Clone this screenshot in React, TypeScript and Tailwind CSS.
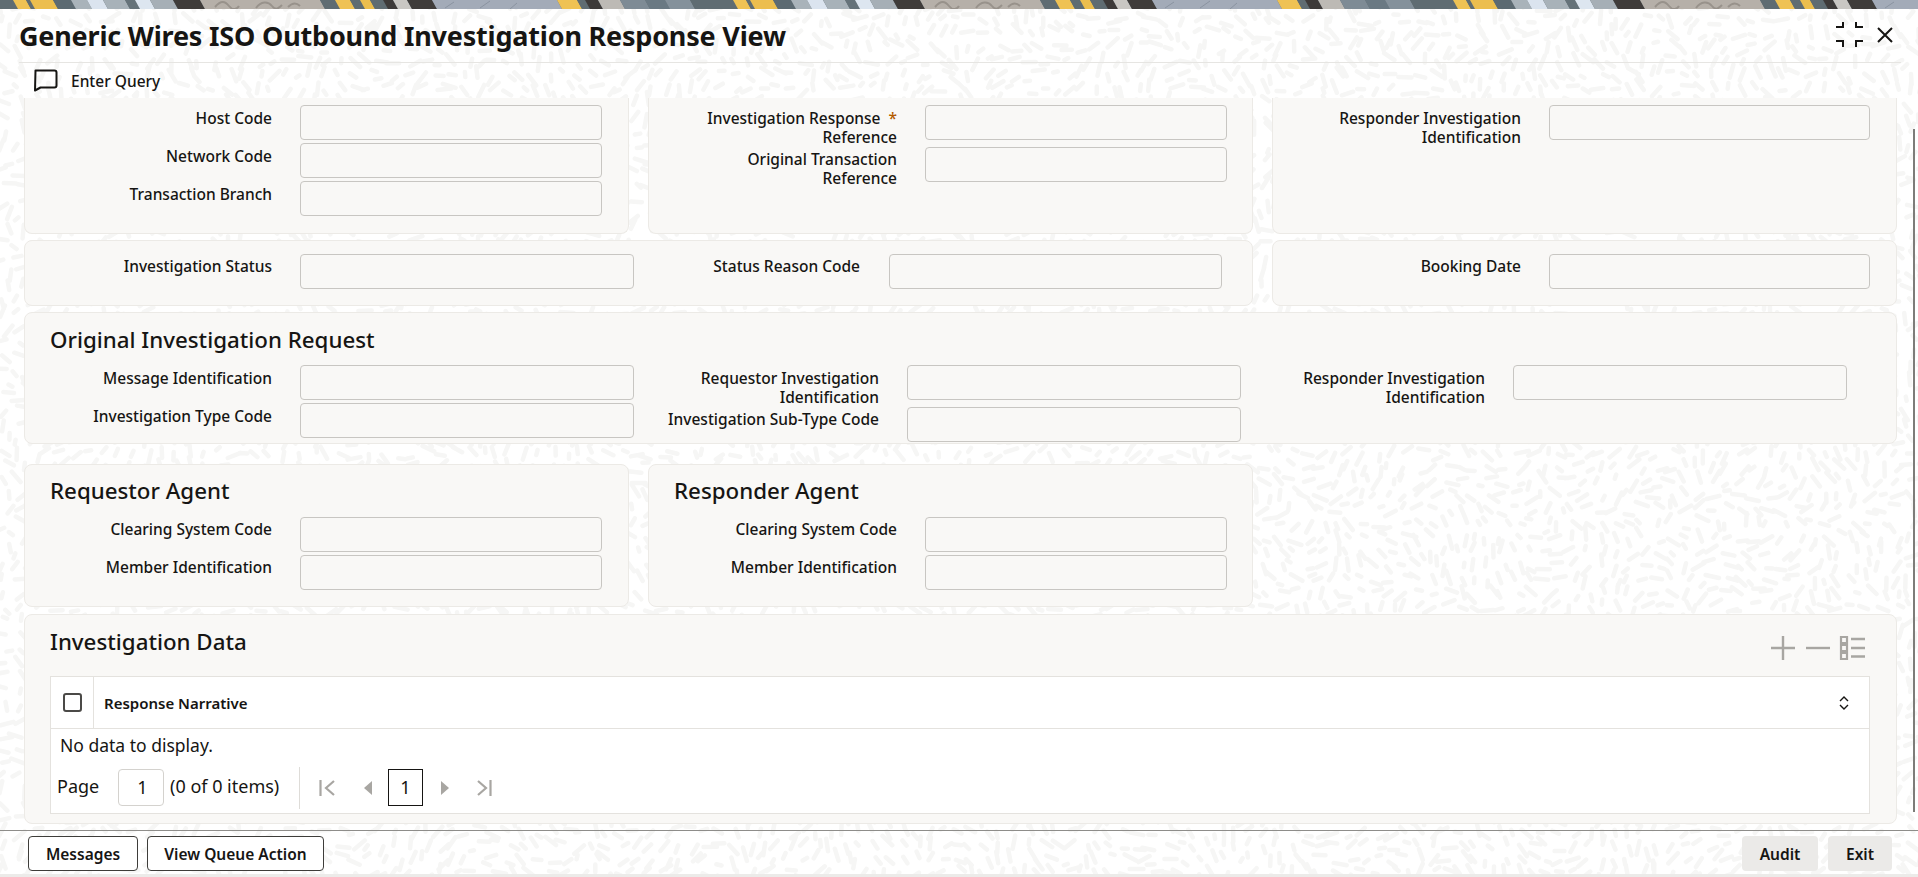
import type { ReactNode } from "react";

// seeded strokes for the faint "rice" texture behind the form
function makeTexture() {
  let seed = 1337;
  const rnd = () => {
    seed = (seed * 16807) % 2147483647;
    return seed / 2147483647;
  };
  const parts: string[] = [];
  for (let y = 0; y < 880; y += 14) {
    for (let x = 0; x < 1920; x += 14) {
      const px = x + rnd() * 11;
      const py = y + rnd() * 11;
      const flow = Math.sin(px / 38) + Math.cos(py / 30) + Math.sin((px + py) / 90);
      const angle = flow * 1.5 + (rnd() - 0.5) * 0.9;
      const len = 2 + rnd() * 5;
      const dx = Math.cos(angle) * len;
      const dy = Math.sin(angle) * len;
      parts.push(
        `M${(px - dx).toFixed(1)} ${(py - dy).toFixed(1)}L${(px + dx).toFixed(1)} ${(py + dy).toFixed(1)}`
      );
    }
  }
  return parts.join("");
}
const texture = makeTexture();

const bandStripes: [number, number, string][] = [
  [-6, 13, "#5f6c72"],
  [13, 26, "#efc254"],
  [26, 30, "#5f6c72"],
  [30, 53, "#ecbe4e"],
  [53, 71, "#5c6a72"],
  [71, 87, "#a9b3ba"],
  [87, 103, "#dbe4ef"],
  [103, 125, "#a8b2b9"],
  [125, 135, "#66737a"],
  [135, 150, "#dde6f0"],
  [150, 173, "#a6afb6"],
  [173, 200, "#3f3c3a"],
  [200, 320, "#b6b0a9"],
  [320, 335, "#5f6c72"],
  [335, 350, "#efc254"],
  [350, 360, "#5f6c72"],
  [360, 370, "#ecbe4e"],
  [370, 383, "#5f6c72"],
  [383, 393, "#3d3a39"],
  [393, 407, "#c9c7c3"],
  [407, 432, "#3f3c3a"],
  [432, 557, "#a3abb8"],
  [557, 577, "#efc254"],
  [577, 585, "#5f6c72"],
  [585, 598, "#3d3a39"],
  [598, 620, "#bdbab5"],
  [620, 645, "#7e8b95"],
  [645, 665, "#6a7983"],
  [665, 690, "#84919b"],
  [690, 714, "#5f6c72"],
];

function TopBand() {
  return (
    <svg className="block h-[9px] w-full shrink-0" viewBox="0 0 1918 9" preserveAspectRatio="none">
      <defs>
        <pattern id="band" x="0" y="0" width="720" height="9" patternUnits="userSpaceOnUse">
          <rect width="720" height="9" fill="#5f6c72" />
          {bandStripes.map(([a, b, c]) => (
            <polygon key={a} points={`${a},0 ${b},0 ${b + 5},9 ${a + 5},9`} fill={c} />
          ))}
          <path
            d="M215 7c6-7 10-6 14-1s8 3 10 0M256 8c5-7 12-7 16-2s7 2 10-1M288 7c5-5 9-4 12-1"
            fill="none"
            stroke="#98928b"
            strokeWidth="2"
          />
          <path d="M445 8l9-6M480 8l10-7M510 9l7-6" fill="none" stroke="#8a93a0" strokeWidth="1" />
        </pattern>
      </defs>
      <rect width="1918" height="9" fill="url(#band)" />
    </svg>
  );
}

function Panel({ className, children }: { className: string; children: ReactNode }) {
  return (
    <div className={`rounded-[8px] border border-[#eceae6] bg-[#f9f8f6] ${className}`}>{children}</div>
  );
}

function Input({ className }: { className: string }) {
  return (
    <div className={`h-[35px] shrink-0 rounded-[4px] border border-[#c8c6c2] bg-[#f9f8f6] ${className}`} />
  );
}

function Field({
  label,
  labelClass,
  inputClass,
}: {
  label: ReactNode;
  labelClass: string;
  inputClass: string;
}) {
  return (
    <div className="flex items-start">
      <div className={`shrink-0 text-right text-[15.5px] leading-[19px] font-medium ${labelClass}`}>{label}</div>
      <Input className={inputClass} />
    </div>
  );
}

function Heading({ children }: { children: ReactNode }) {
  return <div className="text-[22.3px] leading-[30px] font-medium text-[#161513]">{children}</div>;
}

function TableActions() {
  return (
    <svg width="94" height="26" viewBox="0 0 94 26" fill="none" stroke="#a8a6a2" strokeWidth="2.4">
      <path d="M12 1v24M0 13h24" />
      <path d="M35 13h24" />
      <path d="M70 2h6v6h-6zM70 10h6v6h-6zM70 18h6v6h-6z" strokeWidth="2.2" />
      <path d="M80 4h14M80 13h14M80 21.500h14" />
    </svg>
  );
}

function Pager() {
  return (
    <div className="mt-[5px] flex h-[49px] items-center pl-[6px] text-[18px] text-[#161513]">
      <span className="-mt-[2px] w-[61px]">Page</span>
      <div className="flex h-[37px] w-[46px] items-center justify-center rounded-[4px] border border-[#d4d2ce] pl-[3px]">
        1
      </div>
      <span className="-mt-[2px] ml-[6px] w-[129px]">(0 of 0 items)</span>
      <div className="h-[42px] w-px bg-[#dedcd8]" />
      <svg className="ml-[19px]" width="16" height="16" viewBox="0 0 16 16" fill="none" stroke="#a8a6a2" strokeWidth="2.2">
        <path d="M1.500 0v16M15 1 7 8l8 7" />
      </svg>
      <svg className="ml-[28px]" width="10" height="14" viewBox="0 0 10 14" fill="#a8a6a2">
        <path d="M9 0v14L1 7z" />
      </svg>
      <div className="ml-[15px] flex h-[37px] w-[35px] items-center justify-center border border-[#161513]">1</div>
      <svg className="ml-[17px]" width="10" height="14" viewBox="0 0 10 14" fill="#a8a6a2">
        <path d="M1 0v14l8-7z" />
      </svg>
      <svg className="ml-[27px]" width="15" height="16" viewBox="0 0 15 16" fill="none" stroke="#a8a6a2" strokeWidth="2.2">
        <path d="M13.500 0v16M1 1l8 7-8 7" />
      </svg>
    </div>
  );
}

export default function App() {
  const stack = { fontFamily: '"Noto Sans", "Liberation Sans", sans-serif' };
  return (
    <div
      className="relative flex h-[877px] w-[1918px] flex-col overflow-hidden bg-white text-[#161513]"
      style={stack}
    >
      <svg className="absolute inset-0" width="1918" height="877" fill="none">
        <path d={texture} stroke="#f6f6f5" strokeWidth="4.500" strokeLinecap="round" />
      </svg>

      <div className="relative flex min-h-0 flex-1 flex-col">
        <TopBand />

        <header className="mr-[17px] ml-[19px] flex h-[54px] shrink-0 items-center justify-between border-b border-[#e6e5e2]">
          <h1 className="pt-[2px] text-[27px] font-bold tracking-[-0.2px] text-[#161513]">
            Generic Wires ISO Outbound Investigation Response View
          </h1>
          <div className="mr-[8px] mb-[2px] flex items-center gap-[14px]">
            <svg width="27" height="25" viewBox="0 0 27 25" fill="none" stroke="#161513" strokeWidth="2">
              <path d="M0 5h7V0M20 0v5h7M0 19h7v6M27 19h-7v6" />
            </svg>
            <svg width="16" height="16" viewBox="0 0 16 16" fill="none" stroke="#161513" strokeWidth="2">
              <path d="M1 1l14 14M15 1 1 15" />
            </svg>
          </div>
        </header>

        <div className="flex h-[35px] shrink-0 items-center pl-[33px]">
          <svg width="25" height="23" viewBox="0 0 25 23" fill="none" stroke="#161513" strokeWidth="2">
            <path d="M2.500 1.500h19a2 2 0 0 1 2 2v13a2 2 0 0 1-2 2H7.500l-5.500 3z" strokeLinejoin="round" />
          </svg>
          <span className="mt-[2px] ml-[13px] text-[15.5px] font-medium">Enter Query</span>
        </div>

        <main className="flex flex-col pr-[21px] pl-[24px]">
          <div className="flex gap-[19px]">
            <Panel className="h-[136px] w-[605px] rounded-t-none border-t-0 pt-[7px]">
              <div className="flex flex-col gap-[3px]">
                <Field label="Host Code" labelClass="w-[247px] mr-[28px] pt-[4px]" inputClass="w-[302px]" />
                <Field label="Network Code" labelClass="w-[247px] mr-[28px] pt-[4px]" inputClass="w-[302px]" />
                <Field label="Transaction Branch" labelClass="w-[247px] mr-[28px] pt-[4px]" inputClass="w-[302px]" />
              </div>
            </Panel>
            <Panel className="h-[136px] w-[605px] rounded-t-none border-t-0 pt-[7px]">
              <Field
                label={
                  <>
                    Investigation Response<span className="ml-[8px] text-[#b35c00]">*</span>
                    <br />
                    Reference
                  </>
                }
                labelClass="w-[248px] mr-[28px] pt-[4px]"
                inputClass="w-[302px]"
              />
              <Field
                label={
                  <>
                    Original Transaction
                    <br />
                    Reference
                  </>
                }
                labelClass="w-[248px] mr-[28px] pt-[3px] pb-[1px]"
                inputClass="w-[302px]"
              />
            </Panel>
            <Panel className="h-[136px] w-[625px] rounded-t-none border-t-0 pt-[7px]">
              <Field
                label={
                  <>
                    Responder Investigation
                    <br />
                    Identification
                  </>
                }
                labelClass="w-[248px] mr-[28px] pt-[4px]"
                inputClass="w-[321px]"
              />
            </Panel>
          </div>

          <div className="mt-[6px] flex gap-[19px]">
            <Panel className="flex h-[66px] w-[1229px] pt-[13px]">
              <Field label="Investigation Status" labelClass="w-[247px] mr-[28px] pt-[3px]" inputClass="w-[334px]" />
              <Field label="Status Reason Code" labelClass="w-[226px] mr-[29px] pt-[3px]" inputClass="w-[333px]" />
            </Panel>
            <Panel className="h-[66px] w-[625px] pt-[13px]">
              <Field label="Booking Date" labelClass="w-[248px] mr-[28px] pt-[3px]" inputClass="w-[321px]" />
            </Panel>
          </div>

          <Panel className="mt-[6px] h-[132px] w-[1873px] pt-[12px]">
            <div className="pl-[25px]">
              <Heading>Original Investigation Request</Heading>
            </div>
            <div className="mt-[10px] flex">
              <div className="flex flex-col gap-[3px]">
                <Field label="Message Identification" labelClass="w-[247px] mr-[28px] pt-[4px]" inputClass="w-[334px]" />
                <Field label="Investigation Type Code" labelClass="w-[247px] mr-[28px] pt-[4px]" inputClass="w-[334px]" />
              </div>
              <div className="flex flex-col">
                <Field
                  label={
                    <>
                      Requestor Investigation
                      <br />
                      Identification
                    </>
                  }
                  labelClass="w-[245px] mr-[28px] pt-[4px]"
                  inputClass="w-[334px]"
                />
                <Field
                  label="Investigation Sub-Type Code"
                  labelClass="w-[245px] mr-[28px] pt-[3px]"
                  inputClass="w-[334px]"
                />
              </div>
              <Field
                label={
                  <>
                    Responder Investigation
                    <br />
                    Identification
                  </>
                }
                labelClass="w-[244px] mr-[28px] pt-[4px]"
                inputClass="w-[334px]"
              />
            </div>
          </Panel>

          <div className="mt-[20px] flex gap-[19px]">
            <Panel className="h-[143px] w-[605px] pt-[11px]">
              <div className="pl-[25px]">
                <Heading>Requestor Agent</Heading>
              </div>
              <div className="mt-[11px] flex flex-col gap-[3px]">
                <Field label="Clearing System Code" labelClass="w-[247px] mr-[28px] pt-[3px]" inputClass="w-[302px]" />
                <Field label="Member Identification" labelClass="w-[247px] mr-[28px] pt-[3px]" inputClass="w-[302px]" />
              </div>
            </Panel>
            <Panel className="h-[143px] w-[605px] pt-[11px]">
              <div className="pl-[25px]">
                <Heading>Responder Agent</Heading>
              </div>
              <div className="mt-[11px] flex flex-col gap-[3px]">
                <Field label="Clearing System Code" labelClass="w-[248px] mr-[28px] pt-[3px]" inputClass="w-[302px]" />
                <Field label="Member Identification" labelClass="w-[248px] mr-[28px] pt-[3px]" inputClass="w-[302px]" />
              </div>
            </Panel>
          </div>

          <Panel className="mt-[7px] h-[210px] w-[1873px] px-[25px] pt-[12px]">
            <div className="flex h-[49px] items-start justify-between">
              <Heading>Investigation Data</Heading>
              <div className="mt-[8px] mr-[6px]">
                <TableActions />
              </div>
            </div>
            <div className="h-[138px] w-[1820px] border border-[#e4e2de] bg-white">
              <div className="flex h-[52px] items-center border-b border-[#e4e2de]">
                <div className="flex h-full w-[43px] items-center border-r border-[#e4e2de] pl-[12px]">
                  <div className="h-[19px] w-[19px] rounded-[3px] border-2 border-[#4b4a47]" />
                </div>
                <span className="mt-[1px] ml-[10px] flex-1 text-[15px] font-semibold">Response Narrative</span>
                <svg className="mr-[20px]" width="10" height="14" viewBox="0 0 10 14" fill="none" stroke="#161513" strokeWidth="1.400">
                  <path d="M1 5l4-4 4 4M1 9l4 4 4-4" />
                </svg>
              </div>
              <div className="pt-[4px] pl-[9px] text-[17.5px] leading-[25px]">No data to display.</div>
              <Pager />
            </div>
          </Panel>
        </main>

        <footer className="absolute top-[830px] right-0 left-0 flex h-[47px] flex-col border-t border-[#8e8d8a]">
          <div className="flex flex-1 items-start justify-between pt-[5px] pr-[26px] pl-[28px]">
            <div className="flex gap-[9px]">
              <button className="h-[35px] w-[110px] rounded-[4px] border border-[#3e3d3a] bg-white pt-[2px] text-[15.5px] font-semibold">
                Messages
              </button>
              <button className="h-[35px] w-[177px] rounded-[4px] border border-[#3e3d3a] bg-white pt-[2px] text-[15.5px] font-semibold">
                View Queue Action
              </button>
            </div>
            <div className="flex gap-[10px]">
              <button className="h-[35px] w-[76px] rounded-[4px] bg-[#ebeae8] pt-[2px] text-[15.5px] font-semibold">
                Audit
              </button>
              <button className="h-[35px] w-[64px] rounded-[4px] bg-[#ebeae8] pt-[2px] text-[15.5px] font-semibold">
                Exit
              </button>
            </div>
          </div>
          <div className="h-[3px] bg-[#ecebe9]" />
        </footer>

        <div className="absolute top-[129px] right-[3px] h-[683px] w-[2px] bg-[#7d7c79]" />
      </div>
    </div>
  );
}
